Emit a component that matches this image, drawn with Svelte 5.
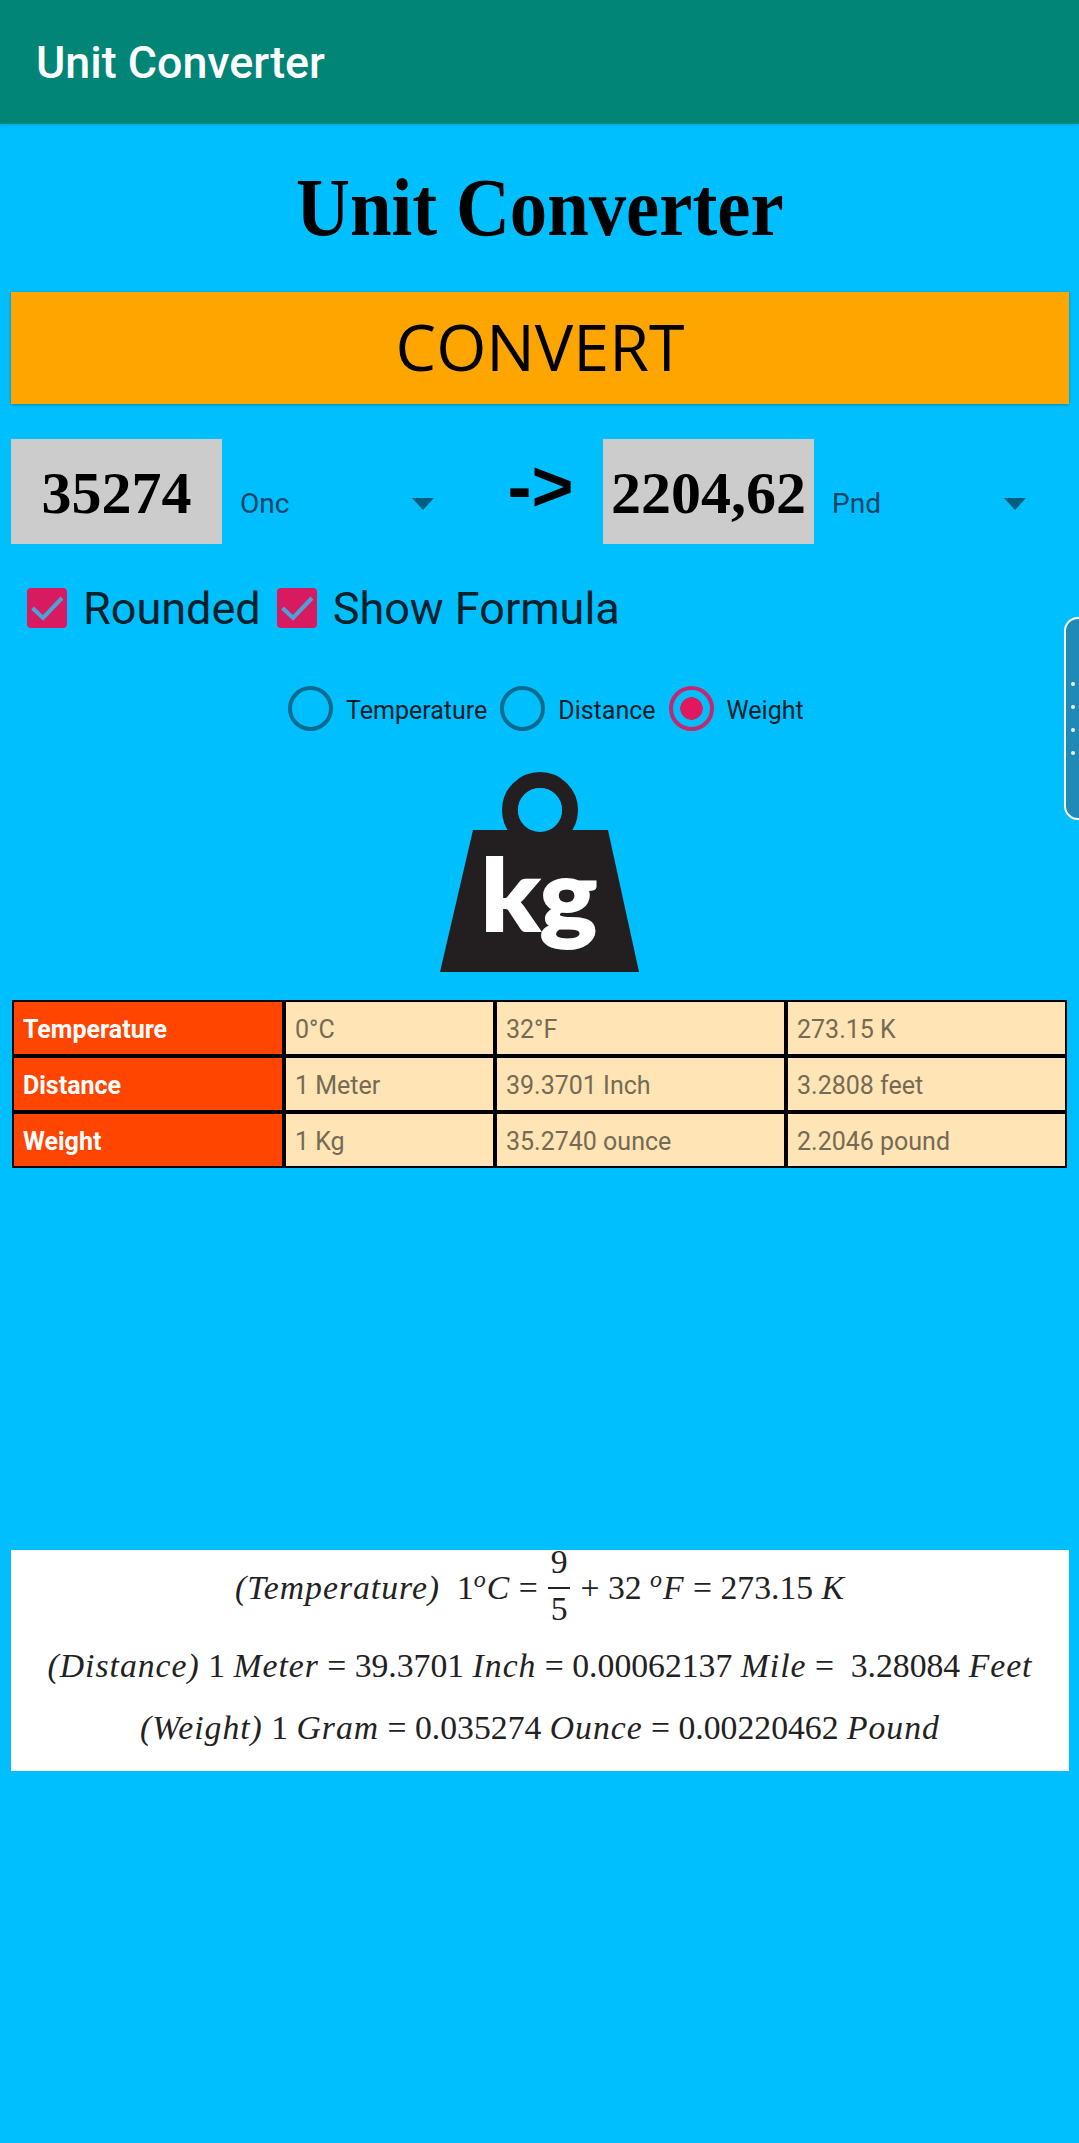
<script>
	const rows = [
		['Temperature', '0°C', '32°F', '273.15 K'],
		['Distance', '1 Meter', '39.3701 Inch', '3.2808 feet'],
		['Weight', '1 Kg', '35.2740 ounce', '2.2046 pound']
	];
</script>

<div class="page">
	<header class="appbar">Unit Converter</header>

	<h1><span>Unit Converter</span></h1>

	<button class="convert">CONVERT</button>

	<div class="inputs">
		<div class="field">35274</div>
		<div class="spinner"><span>Onc</span><i class="caret"></i></div>
		<div class="arrow">-&gt;</div>
		<div class="field">2204,62</div>
		<div class="spinner"><span>Pnd</span><i class="caret"></i></div>
	</div>

	<div class="checks">
		<label class="check">
			<svg width="40" height="40" viewBox="0 0 40 40">
				<rect width="40" height="40" rx="4" fill="#d81b60" />
				<path d="M5.5 20 L16 30 L35 10" fill="none" stroke="#4aa3d8" stroke-width="4" />
			</svg>
			Rounded
		</label>
		<label class="check">
			<svg width="40" height="40" viewBox="0 0 40 40">
				<rect width="40" height="40" rx="4" fill="#d81b60" />
				<path d="M5.5 20 L16 30 L35 10" fill="none" stroke="#4aa3d8" stroke-width="4" />
			</svg>
			Show Formula
		</label>
	</div>

	<div class="radios">
		<div class="radio"><i class="ring"></i><span>Temperature</span></div>
		<div class="radio"><i class="ring"></i><span>Distance</span></div>
		<div class="radio"><i class="ring on"></i><span>Weight</span></div>
	</div>

	<div class="weight">
		<svg width="200" height="200" viewBox="0 0 200 200">
			<circle cx="100" cy="38" r="30" fill="none" stroke="#231f20" stroke-width="16" />
			<path d="M33 58 H168 L199 200 H0 Z" fill="#231f20" />
			<circle cx="100" cy="38" r="22" fill="#00bfff" />
			<text x="41" y="159" class="kg" textLength="116" lengthAdjust="spacingAndGlyphs">kg</text>
		</svg>
	</div>

	<div class="table">
		{#each rows as row}
			<div class="cell head">{row[0]}</div>
			<div class="cell">{row[1]}</div>
			<div class="cell">{row[2]}</div>
			<div class="cell">{row[3]}</div>
		{/each}
	</div>

	<div class="formula">
		<div class="line first">
			<em>(Temperature)</em>&nbsp;&nbsp;1<sup><em>o</em></sup><em>C</em>&nbsp;=&nbsp;<span class="frac"><span class="num">9</span><span class="den">5</span></span>&nbsp;+&nbsp;32&nbsp;<sup><em>o</em></sup><em>F</em>&nbsp;=&nbsp;273.15&nbsp;<em>K</em>
		</div>
		<div class="line second">
			<em>(Distance)</em>&nbsp;1&nbsp;<em>Meter</em>&nbsp;=&nbsp;39.3701&nbsp;<em>Inch</em>&nbsp;=&nbsp;0.00062137&nbsp;<em>Mile</em>&nbsp;=&nbsp;&nbsp;3.28084&nbsp;<em>Feet</em>
		</div>
		<div class="line third">
			<em>(Weight)</em>&nbsp;1&nbsp;<em>Gram</em>&nbsp;=&nbsp;0.035274&nbsp;<em>Ounce</em>&nbsp;=&nbsp;0.00220462&nbsp;<em>Pound</em>
		</div>
	</div>

	<aside class="handle">
		<i></i><i></i><i></i><i></i>
	</aside>
</div>

<style>
	:global(body) {
		margin: 0;
		background: #00bfff;
	}

	.page {
		position: relative;
		height: 2143px;
		overflow: hidden;
		background: #00bfff;
		font-family: Roboto, sans-serif;
		color: #00202c;
	}

	.appbar {
		height: 124px;
		padding-left: 36px;
		box-sizing: border-box;
		display: flex;
		align-items: center;
		background: #008577;
		box-shadow: 0 1px 3px rgba(0, 0, 0, 0.15);
		color: #fff;
		font-size: 44.8px;
		font-weight: 500;
	}

	h1 {
		height: 168px;
		margin: 0;
		padding-bottom: 2px;
		box-sizing: border-box;
		display: flex;
		align-items: center;
		justify-content: center;
		font-family: 'Liberation Serif', serif;
		font-size: 83px;
		font-weight: 700;
		color: #000;
	}

	h1 span {
		transform: scaleX(0.9);
	}

	.convert {
		display: block;
		width: 1058px;
		height: 112px;
		margin: 0 0 0 11px;
		padding: 0 0 4px;
		border: none;
		background: #ffa500;
		box-shadow: 0 1px 3px rgba(0, 0, 0, 0.3);
		font-family: 'Open Sans', sans-serif;
		font-size: 64.5px;
		color: #000;
	}

	.inputs {
		display: flex;
		height: 105px;
		margin: 35px 0 0 11px;
	}

	.field {
		width: 211px;
		box-sizing: border-box;
		padding-top: 4px;
		background: #ccc;
		display: flex;
		align-items: center;
		justify-content: center;
		font-family: 'Liberation Serif', serif;
		font-size: 60px;
		font-weight: 700;
		color: #000;
	}

	.spinner {
		width: 230px;
		box-sizing: border-box;
		padding: 24px 18px 0 18px;
		display: flex;
		justify-content: space-between;
		align-items: center;
		font-size: 28px;
		color: #05456a;
	}

	.caret {
		width: 0;
		height: 0;
		border-left: 11px solid transparent;
		border-right: 11px solid transparent;
		border-top: 12px solid #005f80;
	}

	.arrow {
		width: 151px;
		box-sizing: border-box;
		padding: 0 0 12px 26px;
		display: flex;
		align-items: center;
		justify-content: center;
		font-family: 'Liberation Sans', sans-serif;
		font-size: 72px;
		font-weight: 700;
		color: #000;
	}

	.checks {
		display: flex;
		gap: 16px;
		margin: 44px 0 0 27px;
	}

	.check {
		display: flex;
		align-items: center;
		gap: 16px;
		height: 40px;
		font-size: 45px;
	}

	.radios {
		display: flex;
		margin: 58px 0 0 288px;
		height: 45px;
	}

	.radio {
		display: flex;
		align-items: center;
		font-size: 25px;
		margin-right: 13px;
	}

	.radio span {
		padding-top: 3px;
	}

	.ring {
		width: 45px;
		height: 45px;
		box-sizing: border-box;
		margin-right: 13px;
		border: 4.5px solid #0a6b8f;
		border-radius: 50%;
	}

	.ring.on {
		border-color: #c2296f;
		background: radial-gradient(circle, #e0185f 0 11px, transparent 11.5px);
	}

	.weight {
		display: flex;
		justify-content: center;
		margin-top: 41px;
		height: 200px;
	}

	.weight svg {
		display: block;
	}

	.kg {
		font-family: Lato, sans-serif;
		font-weight: 900;
		font-size: 100px;
		fill: #fff;
		stroke: #fff;
		stroke-width: 2px;
	}

	.table {
		display: grid;
		grid-template-columns: 268px 207px 287px 277px;
		grid-auto-rows: 52px;
		gap: 4px;
		width: fit-content;
		margin: 28px 0 0 12px;
		padding: 2px;
		background: #000;
		font-size: 25px;
	}

	.cell {
		display: flex;
		align-items: center;
		padding: 2px 0 0 9px;
		background: #ffe4b5;
		color: #756a53;
	}

	.cell.head {
		background: #ff4500;
		color: #fff;
		font-weight: 700;
	}

	.formula {
		box-sizing: border-box;
		width: 1058px;
		height: 221px;
		margin: 382px 0 0 11px;
		background: #fff;
		color: #222;
		font-family: 'Liberation Serif', serif;
		font-size: 33.7px;
		text-align: center;
	}

	.line {
		display: flex;
		justify-content: center;
		align-items: center;
		white-space: nowrap;
	}

	.line em {
		letter-spacing: 1px;
	}

	.line sup {
		font-size: 24px;
		line-height: 0;
		position: relative;
		top: -9px;
		vertical-align: baseline;
	}

	.first {
		height: 76px;
	}

	.second {
		height: 72px;
		padding-top: 4px;
	}

	.third {
		height: 52px;
	}

	.frac {
		display: inline-flex;
		flex-direction: column;
		align-items: center;
		margin: 0 2px;
	}

	.num {
		line-height: 50px;
	}

	.den {
		width: 22px;
		margin-bottom: 10px;
		border-top: 2px solid #222;
		line-height: 40px;
		text-align: center;
	}

	.handle {
		position: absolute;
		left: 1064px;
		top: 617px;
		width: 30px;
		height: 203px;
		box-sizing: border-box;
		display: flex;
		flex-direction: column;
		justify-content: center;
		gap: 19px;
		padding-left: 5px;
		background: #1f8ab5;
		border: 2px solid #fff;
		border-radius: 14px;
	}

	.handle i {
		width: 4px;
		height: 4px;
		border-radius: 50%;
		background: #e8f6fb;
	}
</style>
